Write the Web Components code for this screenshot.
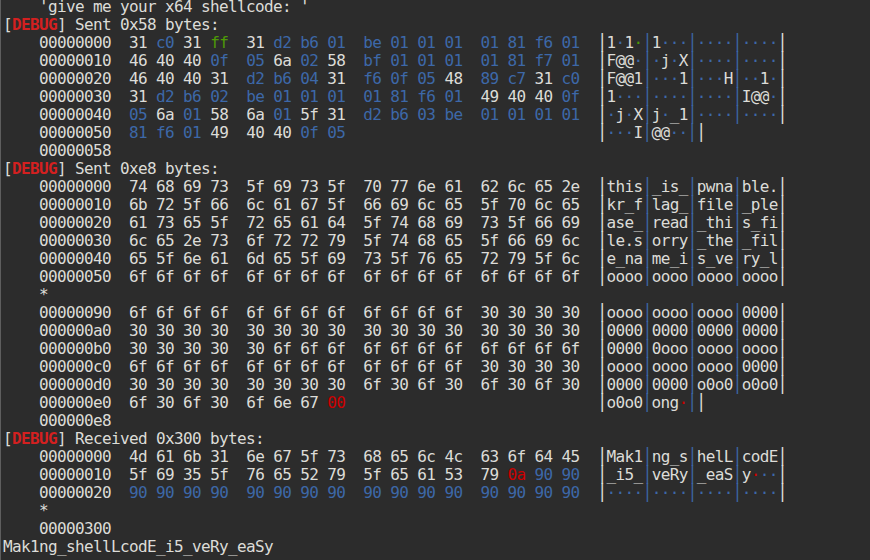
<!DOCTYPE html>
<html>
<head>
<meta charset="utf-8">
<style>
    html, body {
        margin: 0;
        height: 100%;
        background: #2c2c2c;
        overflow: hidden;
    }
</style>
</head>
<body>
<term-screen>
    <term-line>    'give me your x64 shellcode: '</term-line>
    <debug-line>Sent 0x58 bytes:</debug-line>
    <hex-dump bytes="31c031ff31d2b601be0101010181f601 46404 00f056a0258bf0101010181f701 46404031d2b60431f60f054889c731c0 31d2b602be0101010181f6014940400f 056a01586a015f31d2b603be01010101 81f6014940400f05"></hex-dump>
    <term-line>    00000058</term-line>
    <debug-line>Sent 0xe8 bytes:</debug-line>
    <hex-dump bytes="746869735f69735f70776e61626c652e 6b725f666c61675f66696c655f706c65 6173655f726561645f746869735f6669 6c652e736f7272795f7468655f66696c 655f6e616d655f69735f766572795f6c 6f6f6f6f6f6f6f6f6f6f6f6f6f6f6f6f"></hex-dump>
    <term-line>    *</term-line>
    <hex-dump start="144" bytes="6f6f6f6f6f6f6f6f6f6f6f6f30303030 30303030303030303030303030303030 30303030306f6f6f6f6f6f6f6f6f6f6f 6f6f6f6f6f6f6f6f6f6f6f6f30303030 30303030303030306f306f306f306f30 6f306f306f6e6700"></hex-dump>
    <term-line>    000000e8</term-line>
    <debug-line>Received 0x300 bytes:</debug-line>
    <hex-dump bytes="4d616b316e675f7368656c4c636f6445 5f69355f7665527 95f6561537 90a9090 90909090909090909090909090909090"></hex-dump>
    <term-line>    *</term-line>
    <term-line>    00000300</term-line>
    <term-line>Mak1ng_shellLcodE_i5_veRy_eaSy</term-line>
</term-screen>

<script>
class TermScreen extends HTMLElement {
    constructor() {
        super();
        this.attachShadow({mode: 'open'});
        this.shadowRoot.innerHTML = `
        <style>
            :host {
                display: block;
                width: 870px;
                height: 562px;
                box-sizing: border-box;
                margin-top: -2px;
                padding-left: 2px;
                border-left: 1px solid #5e5e5e;
                overflow: hidden;
                background: #2c2c2c;
                color: #dcdcd8;
                font-family: "DejaVu Sans Mono", monospace;
                font-size: 16px;
                letter-spacing: -0.63px;
                line-height: 18px;
            }
        </style>
        <slot></slot>
        `;
    }
}
customElements.define("term-screen", TermScreen);

class TermLine extends HTMLElement {
    constructor() {
        super();
        this.attachShadow({mode: 'open'});
        this.shadowRoot.innerHTML = `
        <style>
            :host {
                display: block;
                height: 18px;
            }
            pre {
                margin: 0;
                font: inherit;
            }
        </style>
        <pre><slot></slot></pre>
        `;
    }
}
customElements.define("term-line", TermLine);

class DebugLine extends HTMLElement {
    constructor() {
        super();
        this.attachShadow({mode: 'open'});
        this.shadowRoot.innerHTML = `
        <style>
            :host {
                display: block;
                height: 18px;
            }
            pre {
                margin: 0;
                font: inherit;
            }
            b {
                color: #d42020;
                font-weight: 700;
            }
        </style>
        <pre>[<b>DEBUG</b>] <slot></slot></pre>
        `;
    }
}
customElements.define("debug-line", DebugLine);

class HexDump extends HTMLElement {
    constructor() {
        super();
        this.attachShadow({mode: 'open'});
    }

    // same colouring as pwntools: printable is plain, the rest blue, newline and nul red
    byteClass(b) {
        if (b === 0 || b === 10) return "red";
        if (b === 255) return "green";
        if (b < 32 || b > 126) return "blue";
        return "";
    }

    getRows() {
        const hex = this.getAttribute("bytes").replace(/\s+/g, "");
        const data = [];
        for (let i = 0; i < hex.length; i += 2) data.push(parseInt(hex.substr(i, 2), 16));
        const start = parseInt(this.getAttribute("start") || "0", 10);
        let html = "";
        for (let i = 0; i < data.length; i += 16) {
            html += this.getRow(start + i, data.slice(i, i + 16));
        }
        return html;
    }

    getRow(offset, row) {
        let hexCol = "";
        let ascii = `<i class="edge">│</i>`;
        for (let n = 0; n < row.length; n++) {
            const b = row[n];
            const cls = this.byteClass(b);
            hexCol += `<span class="${cls}">${b.toString(16).padStart(2, "0")}</span>`;
            hexCol += n % 4 === 3 ? "  " : " ";
            const ch = b >= 32 && b <= 126 ? String.fromCharCode(b) : "·";
            ascii += `<span class="${cls}">${ch.replace("&", "&amp;").replace("<", "&lt;")}</span>`;
            if (n % 4 === 3 && n !== 15) ascii += `<i class="sep">│</i>`;
        }
        if (row.length < 16) {
            // short last row: closing bar comes right after the group it ended in
            hexCol += " ".repeat(52 - row.length * 3 - Math.floor(row.length / 4));
        }
        ascii += `<i class="edge">│</i>`;
        const off = offset.toString(16).padStart(8, "0");
        return `<div class="row">    ${off}  ${hexCol}${ascii}</div>`;
    }

    connectedCallback() {
        this.shadowRoot.innerHTML = `
        <style>
            :host { display: block; }
            .row { height: 18px; white-space: pre; }
            .blue { color: #3d68a8; }
            .red { color: #cc0000; }
            .green { color: #4e9a06; }
            i { font-style: normal; font-weight: 700; }
            .edge { color: #e4e4e0; }
            .sep { color: #3d68a8; }
        </style>
        ${this.getRows()}
        `;
    }
}
customElements.define("hex-dump", HexDump);
</script>
</body>
</html>
